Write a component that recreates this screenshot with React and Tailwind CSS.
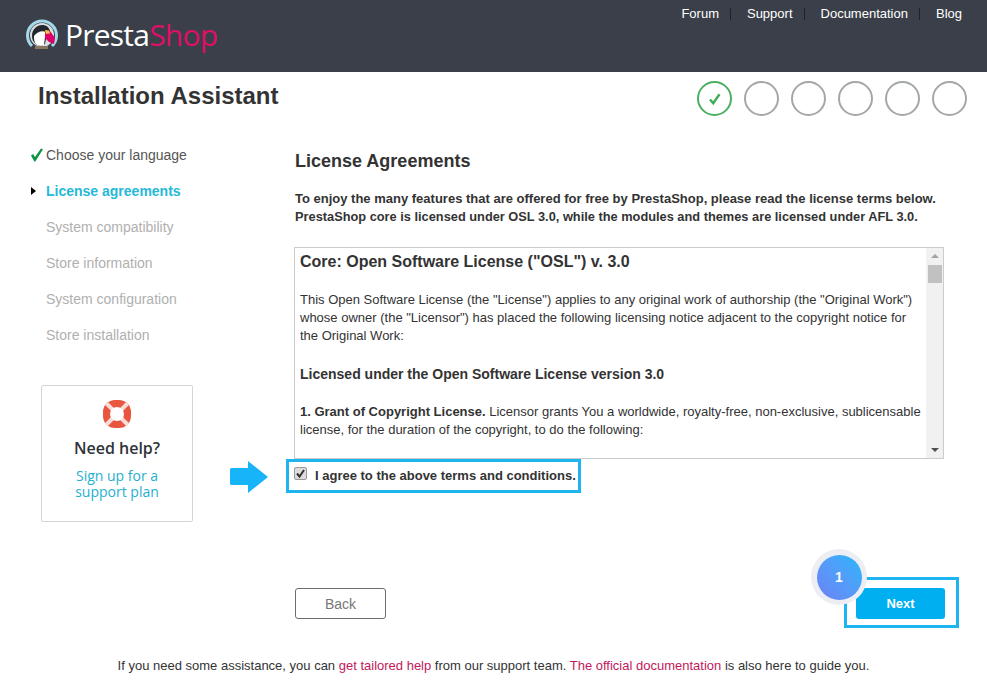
const sans = 'font-["Liberation_Sans",Arial,sans-serif]';

function Logo() {
  return (
    <div className="flex items-center">
      <svg width="32" height="32" viewBox="0 0 32 32" className="shrink-0">
        <path d="M6 27A14.5 14.5 0 1 1 26 27" fill="none" stroke="#a3d9e8" strokeWidth="3" />
        <circle cx="16" cy="16" r="12" fill="#d9dfe2" />
        <path d="M6 17c0-7 5-11 10-11 4 0 7 2 8 6l-3 3-2 10c-3 2-7 2-9 0-3-2-4-5-4-8z" fill="#23282e" />
        <path d="M8 17c3-4 8-6 12-4l1 2-2 3-1 8c-3 1-6 1-8-1-2-2-2-5-2-8z" fill="#ffffff" />
        <path d="M19 13l5-1 5 7-1 6-5-2-4-4z" fill="#df0067" />
        <path d="M19 11l4 .5 1 3-4 .5z" fill="#f5c242" />
        <circle cx="15" cy="11" r="1" fill="#23282e" />
        <path d="M9 27h13v3H9z" fill="#8b7660" />
      </svg>
      <span className='ml-[7px] text-[30px] leading-none font-["Open_Sans",sans-serif] font-medium tracking-[-0.78px]'>
        <span className="text-white">Presta</span>
        <span className="text-[#df0f66]">Shop</span>
      </span>
    </div>
  );
}

function Nav() {
  const items = ["Forum", "Support", "Documentation", "Blog"];
  return (
    <nav className="flex items-start text-[13px] text-white pt-[5px]">
      {items.map((t, i) => (
        <span key={t} className="flex items-center">
          <span className="leading-[18px]">{t}</span>
          {i < 3 && <span className="w-px h-3 bg-[#1f2329] ml-[11px] mr-[16px]" />}
        </span>
      ))}
    </nav>
  );
}

function Steps() {
  return (
    <div className="flex gap-3">
      <div className="w-[35px] h-[35px] rounded-full border-2 border-[#4cb063] flex items-center justify-center">
        <svg width="16" height="16" viewBox="0 0 16 16" fill="none" stroke="#3fae5a" strokeWidth="2.4">
          <path d="M3 8.5l3.2 3.8 6.3-9" />
        </svg>
      </div>
      {[0, 1, 2, 3, 4].map((i) => (
        <div key={i} className="w-[35px] h-[35px] rounded-full border-2 border-[#a4a7aa]" />
      ))}
    </div>
  );
}

function Sidebar() {
  const rest = ["System compatibility", "Store information", "System configuration", "Store installation"];
  return (
    <aside className="w-[295px] shrink-0 pt-[5px]">
      <ul className="text-sm">
        <li className="h-9 flex items-center text-[#555]">
          <svg width="16" height="16" viewBox="0 0 16 16" className="ml-[29px] mr-px shrink-0">
            <path d="M2 8.5l2-1.5 2 3 6-8.5 2 .8-7.7 12.2h-1z" fill="#0b9444" />
          </svg>
          Choose your language
        </li>
        <li className="h-9 flex items-center font-bold text-[#25b9d7]">
          <span className="ml-[31px] mr-[10px] w-0 h-0 border-y-[4px] border-y-transparent border-l-[5px] border-l-black" />
          License agreements
        </li>
        {rest.map((t) => (
          <li key={t} className="h-9 flex items-center pl-[46px] text-[#b0b0b0]">
            {t}
          </li>
        ))}
      </ul>
      <div className='ml-[41px] mt-[32px] w-[152px] h-[137px] border border-[#d5d5d5] rounded-[2px] flex flex-col items-center pt-[14px] font-["Open_Sans",sans-serif]'>
        <svg width="28" height="28" viewBox="0 0 28 28">
          <rect x="0" y="0" width="28" height="28" rx="12" fill="#e8563f" />
          <path d="M3 3l7 7M25 3l-7 7M3 25l7-7M25 25l-7-7" stroke="#f8ddd7" strokeWidth="4" />
          <circle cx="14" cy="14" r="7" fill="#ffffff" />
        </svg>
        <div className="mt-[8px] text-base font-semibold text-[#2f3338] leading-[24px]">Need help?</div>
        <div className="mt-[8px] text-sm text-[#25b0cf] leading-4 text-center">
          Sign up for a
          <br />
          support plan
        </div>
      </div>
    </aside>
  );
}

function LicenseBox() {
  return (
    <div className="w-[650px] h-[212px] border border-[#ccc] flex overflow-hidden text-[#333]">
      <div className="flex-1 pl-[5px] pr-[4px] overflow-hidden text-[13px] leading-[18px]">
        <h3 className="text-base font-bold leading-[18px] mt-[5px]">Core: Open Software License ("OSL") v. 3.0</h3>
        <p className="mt-[20px]">
          This Open Software License (the "License") applies to any original work of authorship (the "Original Work")
          whose owner (the "Licensor") has placed the following licensing notice adjacent to the copyright notice for
          the Original Work:
        </p>
        <p className="mt-[19px] text-sm font-bold">Licensed under the Open Software License version 3.0</p>
        <p className="mt-[19px]">
          <b>1. Grant of Copyright License.</b> Licensor grants You a worldwide, royalty-free,
          non-exclusive, sublicensable license, for the duration of the copyright, to do the following:
        </p>
      </div>
      <div className="w-[17px] mr-0 shrink-0 bg-[#f1f1f1] flex flex-col items-center justify-between">
        <div className="w-full flex flex-col items-center">
          <span className="mt-[6px] w-0 h-0 border-x-[4px] border-x-transparent border-b-[4px] border-b-[#a3a3a3]" />
          <span className="mt-[7px] w-[14px] h-[18px] bg-[#c1c1c1]" />
        </div>
        <span className="mb-[6px] w-0 h-0 border-x-[4px] border-x-transparent border-t-[4px] border-t-[#505050]" />
      </div>
    </div>
  );
}

export default function App() {
  return (
    <div className={`w-[987px] h-[684px] overflow-hidden bg-white relative ${sans}`}>
      <header className="h-[72px] bg-[#3a3f49] flex justify-between pl-[26px] pr-[25px]">
        <div className="pt-[19px]"><Logo /></div>
        <Nav />
      </header>

      <div className="flex justify-between items-start pl-[38px] pr-[20px] pt-[9px] h-[60px]">
        <h1 className="text-2xl font-bold text-[#333] leading-[30px]">Installation Assistant</h1>
        <Steps />
      </div>

      <div className="flex">
        <Sidebar />
        <div className="flex-1 relative">
          <h2 className="text-lg font-bold text-[#333] leading-5 mt-[19px]">License Agreements</h2>
          <p className="mt-[19px] text-[12.8px] font-bold text-[#333] leading-[18px] whitespace-nowrap">
            <span className="text-[13px]">To enjoy the many features that are offered for free by PrestaShop, please read the license terms below.</span>
            <br />
            PrestaShop core is licensed under OSL 3.0, while the modules and themes are licensed under AFL 3.0.
          </p>
          <div className="mt-[21px] -ml-px"><LicenseBox /></div>
          <div className="-ml-[9px] w-[295px] h-[34px] border-[3px] border-[#1eb4f0] flex items-center pl-[5px] text-[13px] font-bold text-[#333]">
            <span className="w-[13px] h-[13px] -mt-[6px] mr-[8px] shrink-0 rounded-[2px] border border-[#9a9a9a] bg-[#dcdcdc] flex items-center justify-center">
              <svg width="11" height="11" viewBox="0 0 11 11" fill="none" stroke="#333" strokeWidth="2">
                <path d="M2 5.5l2.5 3 4.5-6.5" />
              </svg>
            </span>
            I agree to the above terms and conditions.
          </div>
          <svg width="38" height="34" viewBox="0 0 38 34" className="absolute left-[-65px] top-[328px]">
            <path d="M0 9.5A1.5 1.5 0 0 1 1.5 8H18V1l20 16-20 16v-8H1.5A1.5 1.5 0 0 1 0 23.5z" fill="#18b4fa" />
          </svg>

          <div className="mt-[84px] flex justify-between items-center w-[664px]">
            <button className="w-[91px] h-[31px] mt-[2px] border border-[#6c6c6c] rounded-[3px] text-sm text-[#777] bg-white">Back</button>
            <div className="relative border-[3px] border-[#1eb4f0] w-[115px] h-[51px] flex items-center justify-center">
              <button className="w-[89px] h-[31px] -ml-[3px] mt-[2px] pl-px rounded-[3px] bg-[#00aff0] text-white text-[13px] font-bold">Next</button>
              <div className="absolute -left-[36px] -top-[31px] w-[56px] h-[56px] rounded-full bg-[#eceef4] flex items-center justify-center">
                <div className="w-[45px] h-[45px] rounded-full bg-linear-to-tr from-[#6b80f5] to-[#18b6fb] flex items-center justify-center text-white text-sm font-bold">1</div>
              </div>
            </div>
          </div>
        </div>
      </div>

      <footer className="absolute bottom-[9px] left-0 right-0 text-center text-[13px] text-[#333] leading-[18px]">
        If you need some assistance, you can <span className="text-[#c2185b]">get tailored help</span> from our support team. <span className="text-[#c2185b]">The official documentation</span> is also here to guide you.
      </footer>
    </div>
  );
}
